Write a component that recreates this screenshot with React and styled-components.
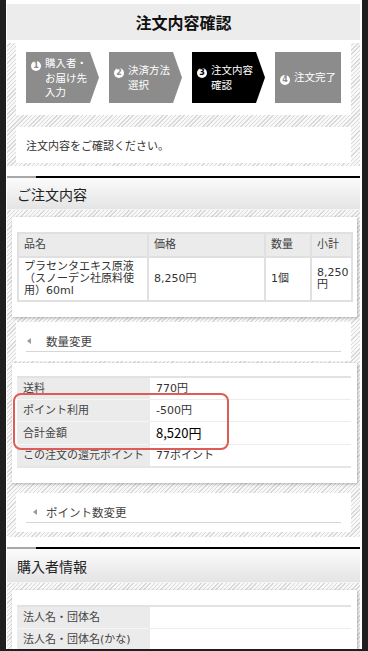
import React from "react";
import styled, { createGlobalStyle } from "styled-components";

const GlobalStyle = createGlobalStyle`
  html, body {
    margin: 0;
    padding: 0;
    background: #1f1f1f;
  }
  body {
    font-family: "DejaVu Sans", "Noto Sans CJK JP", sans-serif;
    color: #333;
  }
  * { box-sizing: border-box; }
`;

const hatch = `repeating-linear-gradient(135deg, #f8f8f8 0 2px, #d9d9d9 2px 3px)`;

const Frame = styled.div`
  margin: 0 6px;
  height: 649px;
  overflow: hidden;
  background: #fff;
  padding: 4px 2px 0 1px;
`;

const PageTitle = styled.h1`
  margin: 0;
  height: 36px;
  background: #ececec;
  display: flex;
  align-items: center;
  justify-content: center;
  font-family: "Noto Sans CJK JP", sans-serif;
  font-size: 16px;
  font-weight: bold;
  color: #111;
`;

const Hatch = styled.div`
  background: ${hatch};
  padding: ${(p) => p.$pad};
  margin-top: ${(p) => p.$top || 0}px;
`;

const StepsBox = styled.div`
  background: #fff;
  height: 72px;
  padding: 9px 10px;
  display: flex;
  gap: 10px;
`;

const Step = styled.div`
  width: ${(p) => (p.$last ? 66 : 74)}px;
  height: 51px;
  background: ${(p) => (p.$active ? "#000" : "#8c8c8c")};
  clip-path: ${(p) =>
    p.$last ? "none" : "polygon(0 0, 64px 0, 100% 50%, 64px 100%, 0 100%)"};
  color: #fff;
  font-family: "Noto Sans CJK JP", sans-serif;
  font-size: 10.5px;
  line-height: 14.5px;
  padding: 0 0 0 19px;
  display: flex;
  align-items: center;
`;

const StepText = styled.div`
  width: 50px;
  white-space: nowrap;
`;

const Num = styled.span`
  display: inline-block;
  width: 10px;
  height: 10px;
  margin: 0 4px 0 -14px;
  border-radius: 50%;
  background: #fff;
  color: ${(p) => (p.$active ? "#000" : "#8c8c8c")};
  font-family: "DejaVu Sans", sans-serif;
  font-size: 8px;
  font-weight: bold;
  line-height: 10px;
  text-align: center;
  vertical-align: -1px;
`;

const MessageBox = styled.div`
  background: #fff;
  height: 36px;
  margin-top: 12px;
  padding: 0 10px;
  display: flex;
  align-items: center;
  font-size: 11px;
`;

const Rule = styled.div`
  margin-top: ${(p) => p.$top}px;
  height: 2px;
  background: linear-gradient(to right, #a8a8a8 29px, #000 29px);
`;

const SectionTitle = styled.h2`
  margin: 0;
  height: ${(p) => p.$h}px;
  padding-left: 10px;
  display: flex;
  align-items: center;
  background: linear-gradient(#fbfbfb, #e4e4e4);
  border-bottom: 1px solid #f4f4f4;
  font-family: "Noto Sans CJK JP", sans-serif;
  font-size: 14px;
  font-weight: normal;
  color: #222;
`;

const Panel = styled.div`
  position: relative;
  background: #fff;
  margin-top: ${(p) => p.$top || 0}px;
  padding: ${(p) => p.$pad};
  box-shadow: 1px 1px 3px rgba(0, 0, 0, 0.28);
`;

const OrderTable = styled.table`
  width: 100%;
  border-collapse: collapse;
  font-size: 11px;
  table-layout: fixed;
`;

const Th = styled.th`
  width: ${(p) => p.$w}px;
  background: #ebebeb;
  border: 2px solid #e0e0e0;
  padding: 4px 5px;
  line-height: 14px;
  font-weight: normal;
  text-align: left;
  color: #444;
`;

const Td = styled.td`
  border: 2px solid #e0e0e0;
  padding: 3px 5px;
  line-height: 12px;
  vertical-align: middle;
`;

const InfoTable = styled.table`
  width: 100%;
  border-collapse: collapse;
  border-top: 2px solid #e2e2e2;
  border-bottom: ${(p) => (p.$open ? "none" : "2px solid #e6e6e6")};
  font-size: 11px;
`;

const Label = styled.th`
  width: 133px;
  background: #ebebeb;
  border-bottom: 1px solid #f6f6f6;
  padding: 4px 6px;
  line-height: 13px;
  font-weight: normal;
  text-align: left;
  color: #444;
  white-space: nowrap;
`;

const Value = styled.td`
  border-bottom: 1px solid #ececec;
  padding: 4px 6px;
  line-height: ${(p) => (p.$big ? 14 : 13)}px;
  font-size: ${(p) => (p.$big ? "13px" : "11px")};
  font-family: ${(p) =>
    p.$big ? `"Noto Sans CJK JP", sans-serif` : "inherit"};
  color: ${(p) => (p.$big ? "#000" : "#333")};
`;

const Highlight = styled.div`
  position: absolute;
  left: 1px;
  top: 30px;
  width: 216px;
  height: 57px;
  border: 2px solid #df5b55;
  border-radius: 8px;
  pointer-events: none;
`;

const LinkBox = styled.div`
  background: #fff;
  margin: ${(p) => p.$top}px 6px 0 4px;
  padding: 11px 10px 9px;
`;

const LinkRow = styled.div`
  display: flex;
  align-items: center;
  height: 19px;
  padding: 0 0 3px ${(p) => p.$indent}px;
  border-bottom: 1px solid #d6d6d6;
  font-family: "Noto Sans CJK JP", sans-serif;
  font-size: 11.5px;
  color: #444;
`;

const Arrow = styled.span`
  width: 0;
  height: 0;
  border-top: 3px solid transparent;
  border-bottom: 3px solid transparent;
  border-right: 4px solid #9a9a9a;
  margin-right: ${(p) => p.$gap}px;
`;

const steps = [
  { n: 1, text: ["購入者・", "お届け先", "入力"] },
  { n: 2, text: ["決済方法", "選択"] },
  { n: 3, text: ["注文内容", "確認"], active: true },
  { n: 4, text: ["注文完了"], last: true },
];

export default function App() {
  return (
    <>
      <GlobalStyle />
      <Frame>
        <PageTitle>注文内容確認</PageTitle>

        <Hatch $top={3} $pad="0 9px 3px">
          <StepsBox>
            {steps.map((s) => (
              <Step key={s.n} $active={s.active} $last={s.last}>
                <StepText>
                  {s.text.map((line, i) => (
                    <div key={i}>
                      {i === 0 && <Num $active={s.active}>{s.n}</Num>}
                      {line}
                    </div>
                  ))}
                </StepText>
              </Step>
            ))}
          </StepsBox>
          <MessageBox>注文内容をご確認ください。</MessageBox>
        </Hatch>

        <Rule $top={10} />
        <SectionTitle $h={32}>ご注文内容</SectionTitle>

        <Hatch $pad="7px 3px 5px 5px">
          <Panel $pad="15px 6px 15px 5px">
            <OrderTable>
              <thead>
                <tr>
                  <Th $w={130}>品名</Th>
                  <Th $w={117}>価格</Th>
                  <Th $w={46}>数量</Th>
                  <Th $w={41}>小計</Th>
                </tr>
              </thead>
              <tbody>
                <tr>
                  <Td>プラセンタエキス原液（スノーデン社原料使用）60ml</Td>
                  <Td>8,250円</Td>
                  <Td>1個</Td>
                  <Td>8,250円</Td>
                </tr>
              </tbody>
            </OrderTable>
          </Panel>

          <LinkBox $top={5}>
            <LinkRow $indent={1}>
              <Arrow $gap={15} />
              数量変更
            </LinkRow>
          </LinkBox>

          <Panel $top={2} $pad="13px 6px 15px 5px">
            <InfoTable>
              <tbody>
                <tr>
                  <Label>送料</Label>
                  <Value>770円</Value>
                </tr>
                <tr>
                  <Label>ポイント利用</Label>
                  <Value>-500円</Value>
                </tr>
                <tr>
                  <Label>合計金額</Label>
                  <Value $big>8,520円</Value>
                </tr>
                <tr>
                  <Label>この注文の還元ポイント</Label>
                  <Value>77ポイント</Value>
                </tr>
              </tbody>
            </InfoTable>
            <Highlight />
          </Panel>

          <LinkBox $top={10}>
            <LinkRow $indent={7}>
              <Arrow $gap={9} />
              ポイント数変更
            </LinkRow>
          </LinkBox>
        </Hatch>

        <Rule $top={10} />
        <SectionTitle $h={34}>購入者情報</SectionTitle>

        <Hatch $pad="7px 3px 5px 5px">
          <Panel $pad="15px 6px 15px 5px">
            <InfoTable $open>
              <tbody>
                <tr>
                  <Label>法人名・団体名</Label>
                  <Value></Value>
                </tr>
                <tr>
                  <Label>法人名・団体名(かな)</Label>
                  <Value></Value>
                </tr>
              </tbody>
            </InfoTable>
          </Panel>
        </Hatch>
      </Frame>
    </>
  );
}
